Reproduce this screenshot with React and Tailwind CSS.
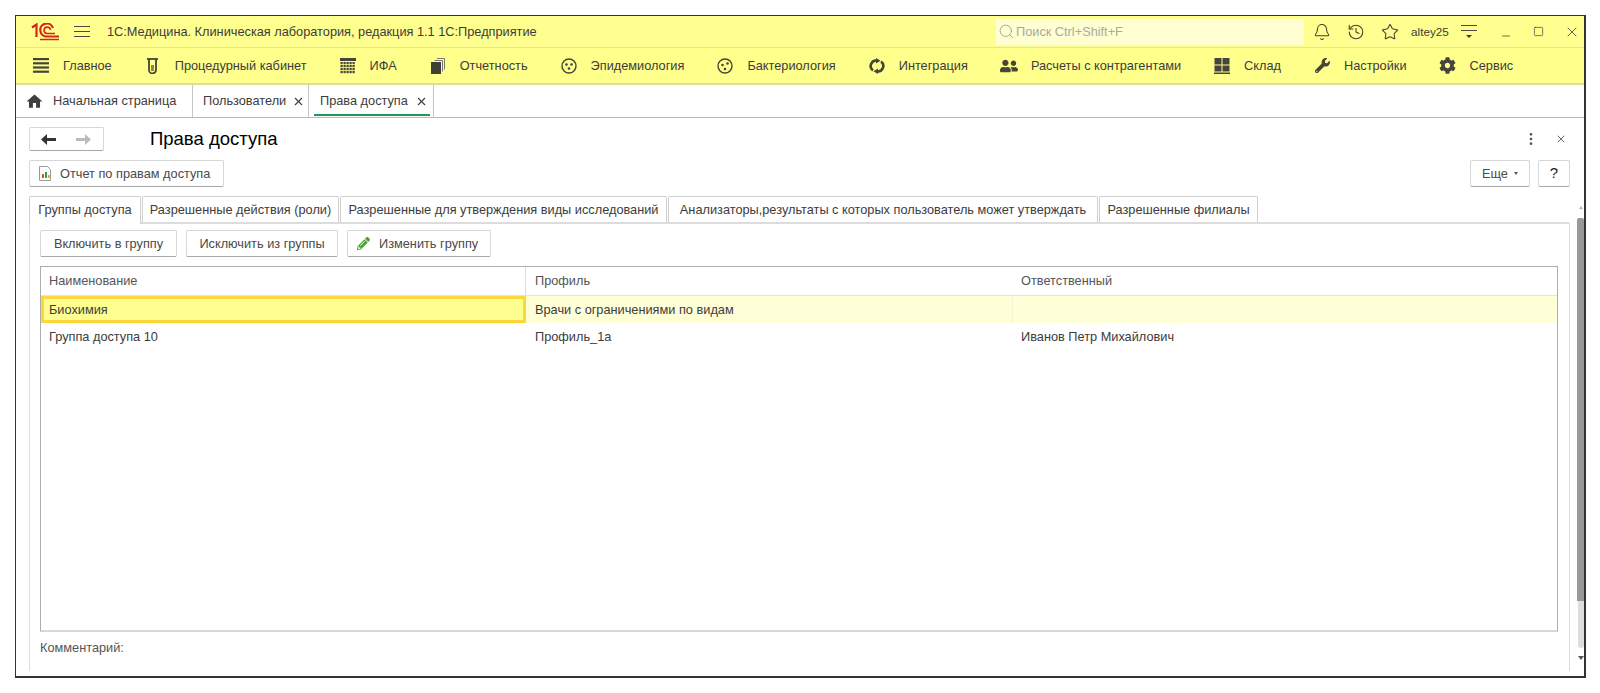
import { Bell, History, Star, Search, X, Minus, Square, EllipsisVertical } from 'lucide-react';
import { FaWrench, FaCog, FaPencilAlt, FaUserFriends } from 'react-icons/fa';
import { MdHome } from 'react-icons/md';

const INK = '#45453a';

const Logo = () => (
  <svg width="29" height="18" viewBox="0 0 29 18" fill="none" stroke="#d8241c" strokeWidth="2.2">
    <path d="M1 4.500 L5.500 1.500 V14" />
    <path d="M22 5 A6.500 6.500 0 1 0 16 13.500 H28" />
    <path d="M19.500 7 A3.200 3.200 0 1 0 16 10.500 H24" strokeWidth="1.600" />
    <path d="M9 16.500 H28" strokeWidth="1.500" />
  </svg>
);

const Lines = () => (
  <svg width="16" height="15" viewBox="0 0 16 15" fill={INK}>
    <rect y="0" width="16" height="2.200" />
    <rect y="4.200" width="16" height="2.200" />
    <rect y="8.400" width="16" height="2.200" />
    <rect y="12.600" width="16" height="2.200" />
  </svg>
);

const Tube = () => (
  <svg width="11" height="16" viewBox="0 0 11 16" fill="none" stroke={INK} strokeWidth="1.800">
    <path d="M0 1h11" />
    <path d="M2 1v11a3.500 3.500 0 0 0 7 0V1" />
    <path d="M5.500 7v6" strokeWidth="3" stroke="#8c8a3c" />
  </svg>
);

const Grid = () => (
  <svg width="16" height="16" viewBox="0 0 16 16" fill={INK}>
    <rect width="16" height="3" />
    {[4, 7, 10, 13].flatMap((y) => [0, 3, 6, 9, 12].map((x) => <rect key={`${x}-${y}`} x={x + 0.5} y={y} width="2.200" height="2.200" />))}
  </svg>
);

const Pages = () => (
  <svg width="14" height="16" viewBox="0 0 14 16" fill="none">
    <path d="M6 .5h7.500v11" stroke="#77776a" />
    <path d="M3.500 2.500h8v11" stroke="#77776a" />
    <rect x="0" y="4" width="10" height="12" fill="#3f3f38" />
  </svg>
);

const Petri = ({ dots }) => (
  <svg width="16" height="16" viewBox="0 0 16 16" fill={INK}>
    <circle cx="8" cy="8" r="7" fill="none" stroke={INK} strokeWidth="1.400" />
    {dots.map(([x, y], i) => <circle key={i} cx={x} cy={y} r="1.300" />)}
  </svg>
);

const Sync = () => (
  <svg width="16" height="16" viewBox="0 0 16 16" fill="none" stroke={INK} strokeWidth="2.600">
    <path d="M4 12.500 A5.500 5.500 0 0 1 8 2.600" />
    <path d="M12 3.500 A5.500 5.500 0 0 1 8 13.400" />
    <path d="M7 0 L11.500 2.800 L7 5.500z M9 16 L4.500 13.200 L9 10.500z" fill={INK} strokeWidth="0" />
  </svg>
);

const Stock = () => (
  <svg width="16" height="16" viewBox="0 0 16 16" fill={INK}>
    <rect x="0.500" y="0" width="7" height="6.500" />
    <rect x="8.500" y="0" width="7" height="6.500" />
    <rect x="0.500" y="7.500" width="7" height="6" />
    <rect x="8.500" y="7.500" width="7" height="6" />
    <rect x="0" y="14.500" width="16" height="1.500" />
  </svg>
);

const MENU = [
  { label: 'Главное', icon: <Lines /> },
  { label: 'Процедурный кабинет', icon: <Tube /> },
  { label: 'ИФА', icon: <Grid /> },
  { label: 'Отчетность', icon: <Pages /> },
  { label: 'Эпидемиология', icon: <Petri dots={[[5.500, 6.500], [10.500, 6.500], [8, 10.500]]} /> },
  { label: 'Бактериология', icon: <Petri dots={[[5.500, 7], [10.500, 5.500], [8, 11]]} /> },
  { label: 'Интеграция', icon: <Sync /> },
  { label: 'Расчеты с контрагентами', icon: <FaUserFriends size={18} color={INK} /> },
  { label: 'Склад', icon: <Stock /> },
  { label: 'Настройки', icon: <FaWrench size={15} color={INK} /> },
  { label: 'Сервис', icon: <FaCog size={17} color={INK} /> },
];

const TABS = [
  { label: 'Группы доступа', width: 'w-[112px]', active: true },
  { label: 'Разрешенные действия (роли)', width: 'w-[197px]' },
  { label: 'Разрешенные для утверждения виды исследований', width: 'w-[327px]' },
  { label: 'Анализаторы,результаты с которых пользователь может утверждать', width: 'w-[430px]' },
  { label: 'Разрешенные филиалы', width: 'w-[159px]' },
];

const ROWS = [
  { name: 'Биохимия', profile: 'Врачи с ограничениями по видам', owner: '', selected: true },
  { name: 'Группа доступа 10', profile: 'Профиль_1а', owner: 'Иванов Петр Михайлович' },
];

function Button({ children, className }) {
  return (
    <button className={`flex h-[27px] items-center rounded-[2px] border border-[#d6d6d6] border-b-[#a8a8a8] bg-white text-[#4a4a4a] ${className}`}>
      {children}
    </button>
  );
}

export default function App() {
  return (
    <div className="h-[693px] w-[1600px] overflow-hidden bg-white pl-[15px] pt-[15px] font-['Liberation_Sans',Arial,sans-serif] text-[12.75px] text-[#3c3c3c]">
      <div className="flex h-[663px] w-[1571px] flex-col border border-r-2 border-b-2 border-[#333333]">
        {/* title bar */}
        <div className="flex h-[32px] items-center border-b border-[#f3dc94] bg-[#ffff8f]">
          <div className="ml-[15px] w-[29px]"><Logo /></div>
          <div className="ml-[14px] flex w-[16px] flex-col gap-[4px]">
            <div className="h-px bg-[#4a4a40]" />
            <div className="h-px bg-[#4a4a40]" />
            <div className="h-px bg-[#4a4a40]" />
          </div>
          <span className="ml-[17px] w-[889px] whitespace-nowrap">1С:Медицина. Клиническая лаборатория, редакция 1.1 1С:Предприятие</span>
          <div className="flex h-[26px] w-[308px] items-center bg-[#ffffd2] pl-[2px] text-[#a9a9a0]">
            <Search size={17} strokeWidth={1.2} color="#9a9a9a" />
            <span className="ml-[1px]">Поиск Ctrl+Shift+F</span>
          </div>
          <Bell size={18} strokeWidth={1.4} className="ml-[9px] text-[#3f3f38]" />
          <History size={18} strokeWidth={1.4} className="ml-[16px] text-[#3f3f38]" />
          <Star size={18} strokeWidth={1.4} className="ml-[16px] text-[#3f3f38]" />
          <span className="ml-[12px] w-[38px] text-[11.75px]">altey25</span>
          <div className="ml-[12px] flex w-[16px] flex-col items-center gap-[4px]">
            <div className="h-px w-full bg-[#4a4a40]" />
            <div className="h-px w-full bg-[#4a4a40]" />
            <div className="size-0 border-x-[3px] border-t-[3px] border-x-transparent border-t-[#3f3f38]" />
          </div>
          <Minus size={12} strokeWidth={1.5} className="ml-[23px] mt-[8px] text-[#3f3f38]" />
          <Square size={11} strokeWidth={1.5} className="ml-[21px] text-[#3f3f38]" />
          <X size={16} strokeWidth={1.2} className="ml-[20px] text-[#3f3f38]" />
        </div>

        {/* sections */}
        <div className="flex h-[37px] items-center gap-[31px] border-b-2 border-[#dedc9e] bg-[#ffff8c] pl-[15px]">
          {MENU.map((item) => (
            <div key={item.label} className="flex items-center gap-[12px]">
              <div className="flex w-[20px] justify-center">{item.icon}</div>
              <span className="whitespace-nowrap">{item.label}</span>
            </div>
          ))}
        </div>

        {/* open pages */}
        <div className="flex h-[33px] border-b border-[#b9b9b9]">
          <div className="flex w-[177px] items-center border-r border-[#c4c4c4] pl-[9px]">
            <MdHome size={19} color="#3f3f3f" />
            <span className="ml-[9px]">Начальная страница</span>
          </div>
          <div className="flex w-[116px] items-center border-r border-[#c4c4c4] pl-[10px]">
            <span>Пользователи</span>
            <X size={13} strokeWidth={2} className="ml-[6px]" />
          </div>
          <div className="relative flex w-[125px] items-center border-r border-[#c4c4c4] pl-[11px]">
            <span>Права доступа</span>
            <X size={13} strokeWidth={2} className="ml-[7px]" />
            <div className="absolute bottom-[1px] left-[5px] right-[3px] h-[2px] bg-[#1f9a55]" />
          </div>
        </div>

        {/* form */}
        <div className="flex min-h-0 flex-1">
          <div className="ml-[13px] flex w-[1541px] flex-col pb-[5px]">
            <div className="mt-[9px] flex h-[24px] items-center">
              <div className="flex h-[24px] w-[75px] items-center rounded-[2px] border border-[#d6d6d6] border-b-[#a8a8a8]">
                <svg width="15" height="11" viewBox="0 0 15 11" fill="#333" className="ml-[11px]"><path d="M0 5.500 L6 0 V4 H15 V7 H6 V11z" /></svg>
                <svg width="15" height="11" viewBox="0 0 15 11" fill="#bcbcbc" className="ml-[20px]"><path d="M15 5.500 L9 0 V4 H0 V7 H9 V11z" /></svg>
              </div>
              <h1 className="ml-[46px] whitespace-nowrap text-[18.5px] leading-none text-black">Права доступа</h1>
              <EllipsisVertical size={16} className="ml-auto text-[#555]" />
              <X size={12} className="ml-[16px] mr-[3px] text-[#666]" />
            </div>

            <div className="mt-[9px] flex h-[27px] items-center">
              <Button className="w-[195px] pl-[8px]">
                <svg width="14" height="15" viewBox="0 0 14 15" className="mr-[8px]">
                  <path d="M1.500 .5h8l3 3v11h-11z" fill="#fff" stroke="#9a9a9a" />
                  <rect x="4" y="8" width="2" height="4" fill="#d8541c" />
                  <rect x="7" y="6" width="2" height="6" fill="#3b9a45" />
                  <rect x="10" y="9" width="1.500" height="3" fill="#d8a01c" />
                </svg>
                Отчет по правам доступа
              </Button>
              <Button className="ml-auto w-[60px] justify-center gap-[6px]">
                Еще
                <span className="size-0 border-x-[2.500px] border-t-[3px] border-x-transparent border-t-[#555]" />
              </Button>
              <Button className="ml-[8px] w-[32px] justify-center text-[15px] text-[#222]">?</Button>
            </div>

            <div className="relative z-10 mt-[9px] flex h-[26px] gap-[1px]">
              {TABS.map((tab) => (
                <div
                  key={tab.label}
                  className={`${tab.width} flex items-center justify-center whitespace-nowrap rounded-t-[2px] border border-b-0 border-[#cfcfcf] ${tab.active ? 'h-[28px] bg-white pb-[2px]' : ''}`}
                >
                  {tab.label}
                </div>
              ))}
            </div>

            <div className="flex min-h-0 flex-1 flex-col rounded-tr-[2px] border-x border-t-2 border-[#dcdcdc] pl-[10px]">
              <div className="mt-[6px] flex h-[27px] gap-[9px]">
                <Button className="w-[137px] justify-center">Включить в группу</Button>
                <Button className="w-[152px] justify-center">Исключить из группы</Button>
                <Button className="w-[144px] pl-[9px]">
                  <FaPencilAlt size={13} color="#4aa332" className="mr-[9px]" />
                  Изменить группу
                </Button>
              </div>

              <div className="mt-[9px] h-[366px] w-[1518px] border border-b-2 border-[#adadad] border-b-[#d8d8d8]">
                <div className="grid h-[29px] grid-cols-[485px_486px_1fr] border-b border-[#e2e2e2] text-[#555]">
                  <div className="flex items-center border-r border-[#dcdcdc] pl-[8px]">Наименование</div>
                  <div className="flex items-center pl-[9px]">Профиль</div>
                  <div className="flex items-center pl-[9px]">Ответственный</div>
                </div>
                {ROWS.map((row) => (
                  <div key={row.name} className={`grid h-[27px] grid-cols-[485px_486px_1fr] ${row.selected ? 'bg-[#ffffd7]' : ''}`}>
                    <div className={`flex items-center ${row.selected ? 'border-[3px] border-[#fcd73c] bg-[#ffff8f] pl-[5px]' : 'pl-[8px]'}`}>{row.name}</div>
                    <div className="flex items-center pl-[9px]">{row.profile}</div>
                    <div className={`flex items-center pl-[9px] ${row.selected ? 'border-l border-[#f2f2d8]' : ''}`}>{row.owner}</div>
                  </div>
                ))}
              </div>

              <div className="mt-[6px] text-[#555]">Комментарий:</div>
            </div>
          </div>

          {/* page scrollbar */}
          <div className="ml-[7px] flex w-[7px] flex-col items-center pt-[88px]">
            <div className="mb-[9px] size-0 border-x-[2px] border-b-[3px] border-x-transparent border-b-[#b5b5b5]" />
            <div className="h-[383px] w-[7px] rounded-t-[2px] bg-[#999999]" />
            <div className="h-[47px] w-[6px] rounded-b-[3px] bg-[#dddddd]" />
            <div className="mt-[8px] size-0 border-x-[3px] border-t-[4px] border-x-transparent border-t-[#555]" />
          </div>
        </div>
      </div>
    </div>
  );
}
